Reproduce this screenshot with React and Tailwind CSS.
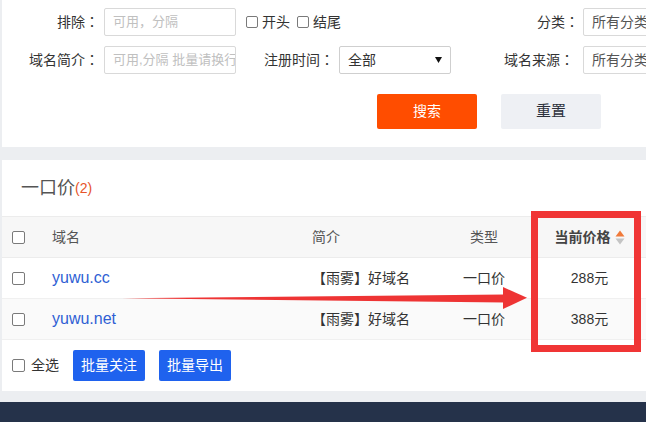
import React from "react";

function Box({ className = "" }) {
  return <span className={"inline-block w-[13px] h-[13px] border-[1.5px] border-[#7a7a7a] rounded-[2px] bg-white shrink-0 " + className} />;
}

function Label({ text, className = "" }) {
  return (
    <div className={"text-right shrink-0 whitespace-nowrap " + className}>
      {text}
      <span className="[font-family:'Noto_Sans_CJK_TC',sans-serif]">：</span>
    </div>
  );
}

export default function App() {
  const rows = [
    { name: "yuwu.cc", price: "288元", bg: "bg-white" },
    { name: "yuwu.net", price: "388元", bg: "bg-[#fafafa]" },
  ];
  return (
    <div className="relative w-[646px] h-[422px] overflow-hidden bg-[#eceef1] [font-family:'Liberation_Sans','Noto_Sans_CJK_SC',sans-serif] [text-spacing-trim:space-all] text-[14px] text-[#333]">
      <div className="ml-[2px] w-[700px] flex flex-col">
        {/* search card */}
        <div className="h-[147px] bg-white pt-[8px] flex flex-col">
          <div className="flex items-center h-[28px]">
            <Label text="排除" className="w-[97px]" />
            <div className="ml-[5px] w-[132px] h-[28px] border border-[#d9d9d9] rounded-[2px] flex items-center pl-[8px] text-[13px] text-[#c0c0c0] shrink-0">可用，分隔</div>
            <div className="w-[215px] shrink-0 flex items-center pl-[10px]">
              <Box className="!w-[12px] !h-[12px]" />
              <span className="ml-[4px]">开头</span>
              <Box className="ml-[7px] !w-[12px] !h-[12px]" />
              <span className="ml-[4px]">结尾</span>
            </div>
            <Label text="分类" className="w-[128px]" />
            <div className="ml-[4px] w-[120px] h-[28px] border border-[#d9d9d9] rounded-[2px] flex items-center pl-[8px] text-[#555] shrink-0">所有分类</div>
          </div>
          <div className="flex items-center h-[28px] mt-[10px]">
            <Label text="域名简介" className="w-[97px]" />
            <div className="ml-[5px] w-[132px] h-[28px] border border-[#d9d9d9] rounded-[2px] flex items-center pl-[8px] text-[13px] text-[#c0c0c0] shrink-0 whitespace-nowrap overflow-hidden">可用,分隔 批量请换行</div>
            <Label text="注册时间" className="w-[98px]" />
            <div className="ml-[5px] w-[112px] h-[28px] border border-[#cfcfcf] rounded-[2px] flex items-center justify-between pl-[8px] pr-[8px] text-[#333] shrink-0">
              <span>全部</span>
              <svg width="7" height="6" viewBox="0 0 7 6"><path d="M0 0H7L3.5 6Z" fill="#111" /></svg>
            </div>
            <Label text="域名来源" className="w-[123px]" />
            <div className="ml-[9px] w-[120px] h-[28px] border border-[#d9d9d9] rounded-[2px] flex items-center pl-[8px] text-[#555] shrink-0">所有分类</div>
          </div>
          <div className="flex mt-[20px] h-[35px]">
            <button className="ml-[375px] w-[100px] h-[35px] bg-[#ff4d00] text-white rounded-[2px]">搜索</button>
            <button className="ml-[24px] w-[100px] h-[35px] bg-[#eef0f4] text-[#2b303b] text-[15px] rounded-[2px]">重置</button>
          </div>
        </div>

        {/* result card */}
        <div className="mt-[13px] h-[231px] bg-white flex flex-col">
          <div className="h-[56px] flex items-center pl-[19px]">
            <span className="text-[18px] text-[#555]">一口价</span>
            <span className="text-[14px] text-[#e6542a]">(2)</span>
          </div>
          <div className="h-[42px] flex items-center bg-[#f7f7f7] border-t border-b border-[#ececec] text-[#555]">
            <div className="w-[50px] pl-[10px] flex items-center shrink-0"><Box /></div>
            <div className="w-[260px] shrink-0">域名</div>
            <div className="w-[132px] shrink-0">简介</div>
            <div className="w-[80px] text-center shrink-0">类型</div>
            <div className="w-[131px] flex items-center justify-center shrink-0 font-bold text-[#444]">
              <span>当前价格</span>
              <svg className="ml-[4px]" width="10" height="15" viewBox="0 0 10 15">
                <path d="M0.5 6.5L5 0.5L9.5 6.5Z" fill="#f07a3a" />
                <path d="M0.5 8.5H9.5L5 14.5Z" fill="#c4c4c4" />
              </svg>
            </div>
          </div>
          {rows.map((r) => (
            <div key={r.name} className={"h-[41px] flex items-center border-b border-[#f0f0f0] " + r.bg}>
              <div className="w-[50px] pl-[10px] flex items-center shrink-0"><Box /></div>
              <div className="w-[260px] shrink-0 text-[16px] text-[#2f5fd4]">{r.name}</div>
              <div className="w-[132px] shrink-0">【雨雾】好域名</div>
              <div className="w-[80px] text-center shrink-0">一口价</div>
              <div className="w-[131px] text-center shrink-0">{r.price}</div>
            </div>
          ))}
          <div className="flex items-center mt-[10px] h-[31px] pl-[10px]">
            <Box />
            <span className="ml-[6px]">全选</span>
            <button className="ml-[14px] w-[72px] h-[31px] bg-[#1f62ee] text-white rounded-[2px]">批量关注</button>
            <button className="ml-[14px] w-[72px] h-[31px] bg-[#1f62ee] text-white rounded-[2px]">批量导出</button>
          </div>
        </div>
      </div>
      <div className="mt-[11px] h-[30px] w-full bg-[#25324a]" />

      {/* annotations */}
      <div className="absolute left-[531px] top-[211px] w-[110px] h-[141px] border-[7px] border-[#f03535]" />
      <svg className="absolute left-0 top-0 pointer-events-none" width="646" height="422" viewBox="0 0 646 422">
        <path d="M122 298.2 L505 294.5 L505 302.5 Z" fill="#ee3434" />
        <path d="M503 287 L527 297.8 L503 309 Z" fill="#ee3434" />
      </svg>
    </div>
  );
}
